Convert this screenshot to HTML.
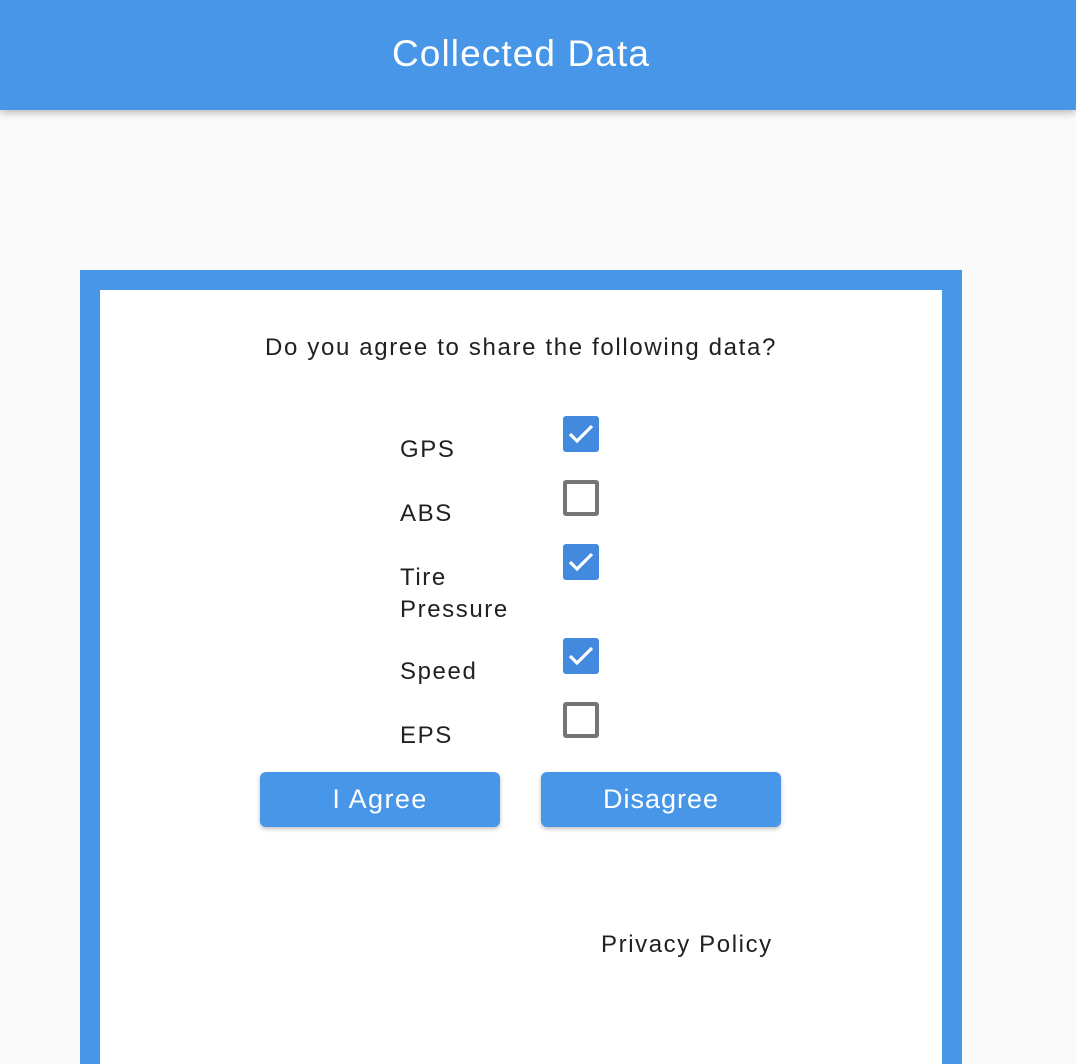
<!DOCTYPE html>
<html><head><style>
*{margin:0;padding:0;box-sizing:border-box}
html,body{width:1076px;height:1064px;overflow:hidden}
body{background:#fafafa;font-family:"Liberation Sans",sans-serif;color:#212121;position:relative}
.bar{position:absolute;left:0;top:0;width:1076px;height:110px;background:#4796e8;box-shadow:0 2px 8px rgba(0,0,0,.3)}
.t{position:absolute;white-space:nowrap}
.l{font-size:24px;line-height:32px;letter-spacing:1.6px;left:400px}
.card{position:absolute;left:80px;top:270px;width:882px;height:794px;border:20px solid #4796e8;border-bottom:0;background:#fff}
.cb{position:absolute;left:563px;width:36px;height:36px;border-radius:3px}
.on{background:#4389de}
.off{border:4px solid #757575;border-radius:3px}
.btn{position:absolute;top:772px;width:240px;height:55px;background:#4796e8;border-radius:6px;box-shadow:0 2px 4px rgba(0,0,0,.25);color:#fff;font-size:27px;text-align:center;line-height:55px}
</style></head><body>
<div class="bar"></div>
<div class="t" style="left:0;width:1042px;text-align:center;top:28px;font-size:37px;line-height:52px;color:#fff;letter-spacing:1.1px">Collected Data</div>
<div class="card"></div>
<div class="t" style="left:0;width:1042px;text-align:center;top:332px;font-size:24px;line-height:32px;letter-spacing:1.65px">Do you agree to share the following data?</div>
<div class="t l" style="top:434px">GPS</div>
<div class="t l" style="top:498px">ABS</div>
<div class="t l" style="top:562px">Tire<br>Pressure</div>
<div class="t l" style="top:656px">Speed</div>
<div class="t l" style="top:720px">EPS</div>
<div class="cb on" style="top:416px"><svg width="36" height="36"><path d="M7 18 L14 25 L29 10" stroke="#fff" stroke-width="3.2" fill="none"/></svg></div>
<div class="cb off" style="top:480px"></div>
<div class="cb on" style="top:544px"><svg width="36" height="36"><path d="M7 18 L14 25 L29 10" stroke="#fff" stroke-width="3.2" fill="none"/></svg></div>
<div class="cb on" style="top:638px"><svg width="36" height="36"><path d="M7 18 L14 25 L29 10" stroke="#fff" stroke-width="3.2" fill="none"/></svg></div>
<div class="cb off" style="top:702px"></div>
<div class="btn" style="left:260px;letter-spacing:1.4px">I Agree</div>
<div class="btn" style="left:541px;letter-spacing:1px">Disagree</div>
<div class="t" style="left:601px;top:929px;font-size:24px;line-height:32px;letter-spacing:1.6px">Privacy Policy</div>
</body></html>
